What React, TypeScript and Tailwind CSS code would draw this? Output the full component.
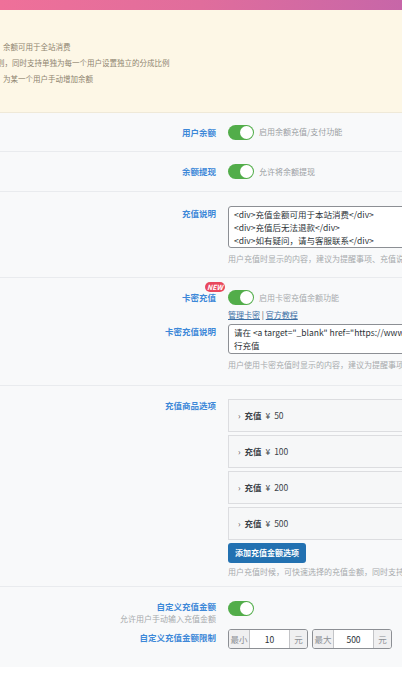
import React from "react";

const font = { fontFamily: '"Noto Sans CJK SC", "Noto Sans", sans-serif' };

function Toggle() {
  return (
    <div className="relative w-[26px] h-[15px] rounded-full bg-[#52ad4a] shrink-0">
      <div className="absolute right-[1px] top-[1px] w-[13px] h-[13px] rounded-full bg-white" />
    </div>
  );
}

function Label({ children, top = "pt-0" }: { children: React.ReactNode; top?: string }) {
  return (
    <div className={`w-[216px] shrink-0 text-right text-[8.5px] leading-[13px] font-semibold text-[#3d88d8] ${top}`}>
      {children}
    </div>
  );
}

function Row({ children, cls }: { children: React.ReactNode; cls: string }) {
  return <div className={`border-b border-[#e9ebee] ${cls}`}>{children}</div>;
}

function Acc({ v }: { v: string }) {
  return (
    <div className="h-[33px] w-[300px] border border-[#dcdde0] bg-[#f6f7f8] flex items-center pl-[9px] text-[8.5px] text-[#3c434a]">
      <span className="mr-[4px] text-[#555]">›</span>
      <span className="font-bold mr-[4px]">充值</span>
      <span>¥&nbsp;&nbsp;{v}</span>
    </div>
  );
}

export default function App() {
  return (
    <div style={font} className="w-[402px] h-[692px] overflow-hidden bg-white">
      <div className="h-[10px] bg-gradient-to-r from-[#ef7099] via-[#e06d9c] to-[#c766a8]" />
      <div className="h-[103px] bg-[#fdf7e6] border-b border-[#efe9d8] pt-[29px] text-[7.5px] leading-[16px] text-[#8e8470] whitespace-nowrap">
        <div className="pl-[3px]">余额可用于全站消费</div>
        <div className="-ml-[3px]">则，同时支持单独为每一个用户设置独立的分成比例</div>
        <div className="pl-[3px]">为某一个用户手动增加余额</div>
      </div>
      <div className="bg-[#f8f9fa]">
        <Row cls="h-[39px] flex items-center gap-[12px]">
          <Label>用户余额</Label>
          <div className="flex items-center gap-[5px]">
            <Toggle />
            <span className="text-[8px] text-[#9a9ea3]">启用余额充值/支付功能</span>
          </div>
        </Row>
        <Row cls="h-[40px] flex items-center gap-[12px]">
          <Label>余额提现</Label>
          <div className="flex items-center gap-[5px]">
            <Toggle />
            <span className="text-[8px] text-[#9a9ea3]">允许将余额提现</span>
          </div>
        </Row>
        <Row cls="h-[86px] flex gap-[12px] pt-[14px]">
          <Label top="pt-[1px]">充值说明</Label>
          <div className="flex flex-col">
            <div className="w-[300px] h-[42px] bg-white border border-[#8c8f94] rounded-[3px] px-[5px] pt-[1px] text-[8.5px] leading-[13px] text-[#2c3338] whitespace-nowrap">
              <div>&lt;div&gt;充值金额可用于本站消费&lt;/div&gt;</div>
              <div>&lt;div&gt;充值后无法退款&lt;/div&gt;</div>
              <div>&lt;div&gt;如有疑问，请与客服联系&lt;/div&gt;</div>
            </div>
            <div className="mt-[4px] text-[8px] leading-[13px] text-[#a7aaad] whitespace-nowrap">用户充值时显示的内容，建议为提醒事项、充值说明</div>
          </div>
        </Row>
        <Row cls="h-[108px] pt-[12px]">
          <div className="flex gap-[12px]">
            <div className="w-[216px] shrink-0 flex justify-end">
              <div className="relative text-[8.5px] leading-[13px] font-semibold text-[#3d88d8] mt-[1px]">
                卡密充值
                <span className="absolute -top-[9px] -right-[9px] bg-[#e8485d] text-white text-[7px] leading-[10px] font-bold px-[2px] rounded-full italic">NEW</span>
              </div>
            </div>
            <div className="flex flex-col">
              <div className="flex items-center gap-[5px]">
                <Toggle />
                <span className="text-[8px] text-[#a7aaad]">启用卡密充值余额功能</span>
              </div>
              <div className="mt-[3px] text-[8px] leading-[13px] text-[#50575e]">
                <span className="underline text-[#3a6ea5]">管理卡密</span> | <span className="underline text-[#3a6ea5]">官方教程</span>
              </div>
            </div>
          </div>
          <div className="flex gap-[12px] mt-[3px]">
            <Label top="pt-[1px]">卡密充值说明</Label>
            <div className="flex flex-col">
              <div className="w-[300px] h-[30px] bg-white border border-[#8c8f94] rounded-[3px] px-[5px] pt-[1px] text-[8.5px] leading-[13px] text-[#2c3338] whitespace-nowrap overflow-hidden">
                <div>请在 &lt;a target="_blank" href="https://www.</div>
                <div>行充值</div>
              </div>
              <div className="mt-[4px] text-[8px] leading-[13px] text-[#a7aaad] whitespace-nowrap">用户使用卡密充值时显示的内容，建议为提醒事项</div>
            </div>
          </div>
        </Row>
        <Row cls="h-[201px] flex gap-[12px] pt-[13px]">
          <Label top="pt-[0px]">充值商品选项</Label>
          <div className="flex flex-col">
            <div className="flex flex-col gap-[3px]">
              <Acc v="50" />
              <Acc v="100" />
              <Acc v="200" />
              <Acc v="500" />
            </div>
            <div className="mt-[3px] w-[78px] h-[20px] rounded-[3px] bg-[#2271b1] text-white text-[8px] font-bold flex items-center justify-center">添加充值金额选项</div>
            <div className="mt-[2px] text-[8px] leading-[13px] text-[#a7aaad] whitespace-nowrap">用户充值时候，可快速选择的充值金额，同时支持</div>
          </div>
        </Row>
        <div className="h-[80px] pt-[13px]">
          <div className="flex gap-[12px]">
            <div className="w-[216px] shrink-0 text-right">
              <div className="text-[8.5px] leading-[13px] font-semibold text-[#3d88d8]">自定义充值金额</div>
              <div className="text-[8px] leading-[12px] text-[#a7aaad]">允许用户手动输入充值金额</div>
            </div>
            <div className="pt-[1px]">
              <Toggle />
            </div>
          </div>
          <div className="flex gap-[12px] mt-[4px]">
            <Label top="pt-[2px]">自定义充值金额限制</Label>
            <div className="flex gap-[4px]">
              {[["最小", "10"], ["最大", "500"]].map(([a, b]) => (
                <div key={a} className="flex h-[20px] w-[80px] border border-[#8c8f94] rounded-[3px] overflow-hidden text-[8.5px]">
                  <div className="w-[21px] bg-[#f0f0f1] border-r border-[#c3c4c7] flex items-center justify-center text-[#8c8f94]">{a}</div>
                  <div className="flex-1 bg-white flex items-center justify-center text-[#2c3338]">{b}</div>
                  <div className="w-[18px] bg-[#f0f0f1] border-l border-[#c3c4c7] flex items-center justify-center text-[#8c8f94]">元</div>
                </div>
              ))}
            </div>
          </div>
        </div>
      </div>
    </div>
  );
}
